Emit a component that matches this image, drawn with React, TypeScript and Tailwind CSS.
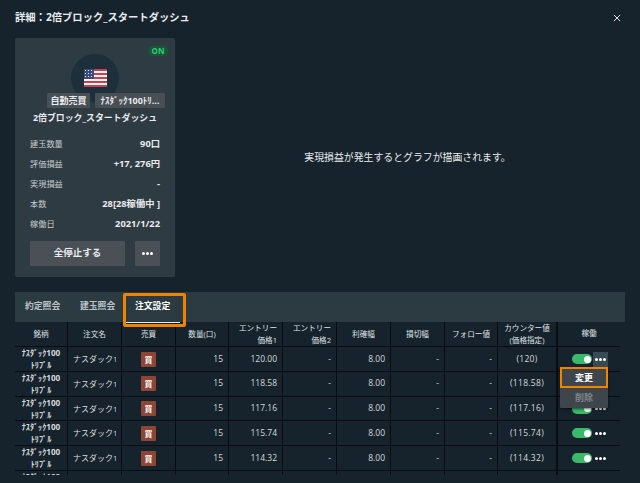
const font = { fontFamily: '"Open Sans", "Noto Sans CJK JP", sans-serif' };

const stats = [
  ["建玉数量", "90口"],
  ["評価損益", "+17, 276円"],
  ["実現損益", "-"],
  ["本数", "28[28稼働中 ]"],
  ["稼働日", "2021/1/22"],
];

const rows = [
  ["120.00", "(120)"],
  ["118.58", "(118.58)"],
  ["117.16", "(117.16)"],
  ["115.74", "(115.74)"],
  ["114.32", "(114.32)"],
];

const cols = "grid grid-cols-[53px_54px_54px_53px_54px_54px_54px_54px_53px_60px_62px]";
const cell = "flex items-center border-r border-[#070d12] h-full";

function Flag() {
  return (
    <svg width="23" height="18" viewBox="0 0 23 18">
      <rect width="23" height="18" fill="#f4f4f4" />
      <rect y="0" width="23" height="2" fill="#c8404f" />
      <rect y="4" width="23" height="2" fill="#c8404f" />
      <rect y="8" width="23" height="2" fill="#c8404f" />
      <rect y="12" width="23" height="2" fill="#c8404f" />
      <rect y="16" width="23" height="2" fill="#c8404f" />
      <rect width="10" height="10" fill="#3d4a7d" />
      <g fill="#e6e8f0">
        <rect x="1" y="1" width="1" height="1" />
        <rect x="4" y="1" width="1" height="1" />
        <rect x="7" y="1" width="1" height="1" />
        <rect x="1" y="4" width="1" height="1" />
        <rect x="4" y="4" width="1" height="1" />
        <rect x="7" y="4" width="1" height="1" />
        <rect x="1" y="7" width="1" height="1" />
        <rect x="4" y="7" width="1" height="1" />
        <rect x="7" y="7" width="1" height="1" />
      </g>
    </svg>
  );
}

function Dots() {
  return (
    <span className="flex gap-[1px]">
      <span className="w-[3px] h-[3px] rounded-full bg-white" />
      <span className="w-[3px] h-[3px] rounded-full bg-white" />
      <span className="w-[3px] h-[3px] rounded-full bg-white" />
    </span>
  );
}

function HeaderCell({ children, right, thick }: { children: React.ReactNode; right?: boolean; thick?: boolean }) {
  return (
    <div className={`${cell} text-[7.6px] leading-[12px] text-[#dfe3e6] ${thick ? "border-r-2" : ""} ${right ? "justify-end text-right pr-[5px]" : "justify-center text-center"}`}>
      <div>{children}</div>
    </div>
  );
}

export default function App() {
  return (
    <div style={font} className="relative w-[640px] h-[483px] overflow-hidden bg-[#17232c] text-[#e8ebed]">
      <div className="flex items-center justify-between pl-[15px] pr-[19px] pt-[10px] h-[38px] pb-[13px]">
        <h1 className="text-[10.3px] font-bold leading-[15px]">詳細：2倍ブロック_スタートダッシュ</h1>
        <svg width="8" height="8" viewBox="0 0 9 9" stroke="#e8ebed" strokeWidth="1.1">
          <path d="M1 1 8 8M8 1 1 8" />
        </svg>
      </div>

      <div className="flex pl-[15px] h-[239px]">
        <div className="relative w-[160px] h-full bg-[#2f3b42] rounded-[2px] px-[15px] flex flex-col">
          <span className="absolute right-[7px] top-[8px] w-[20px] h-[10px] rounded-full bg-[#155a37] text-[#3fc47c] text-[8px] font-bold leading-[10px] text-center">ON</span>
          <div className="mx-auto mt-[15px] w-[50px] h-[50px] rounded-full bg-[#1e2f3c] border border-[#2a3d4b] flex items-center justify-center shrink-0">
            <Flag />
          </div>
          <div className="flex gap-[5px] -mt-[10px] ml-[17px] relative w-[118px]">
            <span className="h-[15px] w-[43px] shrink-0 bg-[#484f55] text-[9px] font-bold leading-[15px] text-center rounded-[1px]">自動売買</span>
            <span className="h-[15px] w-[70px] shrink-0 bg-[#484f55] text-[9px] font-bold leading-[15px] text-center rounded-[1px] whitespace-nowrap overflow-hidden">ﾅｽﾀﾞｯｸ100ﾄﾘ…</span>
          </div>
          <p className="mt-[2px] h-[16px] text-[8.9px] font-bold leading-[16px] text-center whitespace-nowrap">2倍ブロック_スタートダッシュ</p>
          <div className="mt-[11px] flex flex-col gap-[7px]">
            {stats.map(([label, value]) => (
              <div key={label} className="flex justify-between h-[13px] items-center leading-[13px]">
                <span className="text-[#c5cccf] text-[8.2px]">{label}</span>
                <span className="font-bold text-[9.3px]">{value}</span>
              </div>
            ))}
          </div>
          <div className="mt-[11px] flex justify-between">
            <button className="w-[95px] h-[25px] bg-[#4a5055] rounded-[1px] text-[9.5px] font-bold text-[#e8ebed]">全停止する</button>
            <button className="w-[25px] h-[25px] bg-[#4a5055] rounded-[1px] flex items-center justify-center">
              <Dots />
            </button>
          </div>
        </div>
        <div className="flex-1 flex items-center justify-center">
          <p className="text-[9.9px]">実現損益が発生するとグラフが描画されます。</p>
        </div>
      </div>

      <div className="relative mt-[15px] ml-[15px] w-[610px]">
        <div className="flex items-start h-[30px] pl-[10px] gap-[20px] bg-[#2c3a42] text-[8.8px] font-bold">
          <span className="w-[35px] pt-[8px] text-[#b8c1c6] whitespace-nowrap">約定照会</span>
          <span className="w-[35px] pt-[8px] text-[#b8c1c6] whitespace-nowrap">建玉照会</span>
          <span className="w-[35px] pt-[8px] text-white whitespace-nowrap">注文設定</span>
        </div>
        <div className="absolute left-[108px] top-[1px] w-[63px] h-[34px] border-[3px] border-[#f28300] rounded-[2px]">
          <div className="absolute left-0 right-[3px] bottom-[1px] h-[1.5px] bg-[#e8ebed]" />
        </div>

        <div className="w-[605px] h-[153px] overflow-hidden">
          <div className={`${cols} h-[25px] border-b border-[#070d12]`}>
            <HeaderCell>銘柄</HeaderCell>
            <HeaderCell>注文名</HeaderCell>
            <HeaderCell>売買</HeaderCell>
            <HeaderCell>数量(口)</HeaderCell>
            <HeaderCell right>エントリー<br />価格1</HeaderCell>
            <HeaderCell right>エントリー<br />価格2</HeaderCell>
            <HeaderCell>利確幅</HeaderCell>
            <HeaderCell>損切幅</HeaderCell>
            <HeaderCell>フォロー値</HeaderCell>
            <HeaderCell thick>カウンター値<br />(価格指定)</HeaderCell>
            <div className="flex items-center justify-center text-[7.6px] text-[#dfe3e6]">稼働</div>
          </div>
          {[...rows, ["", ""]].map(([price, counter], i) => (
            <div key={i} className={`${cols} h-[24.8px] border-b border-[#070d12] text-[8.5px] text-[#d5dadd]`}>
              <div className={`${cell} justify-center text-center text-[8.2px] leading-[12px] font-bold`}>
                <div>ﾅｽﾀﾞｯｸ100<br />ﾄﾘﾌﾟﾙ</div>
              </div>
              <div className={`${cell} justify-center overflow-hidden whitespace-nowrap text-[8px]`}>
                {price && <span className="w-[43px] overflow-hidden">ナスダック1</span>}
              </div>
              <div className={`${cell} justify-center`}>
                {price && <span className="w-[15px] h-[15px] bg-[#8f4535] rounded-[1px] text-[8px] font-bold text-white leading-[15px] text-center">買</span>}
              </div>
              <div className={`${cell} justify-end pr-[5px]`}>{price && "15"}</div>
              <div className={`${cell} justify-end pr-[5px]`}>{price}</div>
              <div className={`${cell} justify-end pr-[5px]`}>{price && "-"}</div>
              <div className={`${cell} justify-end pr-[5px]`}>{price && "8.00"}</div>
              <div className={`${cell} justify-end pr-[5px]`}>{price && "-"}</div>
              <div className={`${cell} justify-end pr-[5px]`}>{price && "-"}</div>
              <div className={`${cell} border-r-2 justify-center tracking-[0.3px]`}>{counter}</div>
              <div className="flex items-center pl-[14px] gap-[3px]">
                {price && (
                  <>
                    <span className="w-[20px] h-[10px] rounded-full bg-[#3bb96a] flex items-center justify-end pr-[1.5px]">
                      <span className="w-[7px] h-[7px] rounded-full bg-white" />
                    </span>
                    <Dots />
                  </>
                )}
              </div>
            </div>
          ))}
        </div>

        <div className="absolute left-[545px] top-[75px] w-[48px] h-[41px] bg-[#3f464b] shadow-[0_1px_3px_rgba(0,0,0,0.6)] rounded-[1px] text-[9px] font-bold">
          <div className="h-[21px] border-[2px] border-[#f28300] flex items-center justify-center text-white">変更</div>
          <div className="h-[20px] flex items-center justify-center text-[#7d858a]">削除</div>
        </div>
        <div className="absolute left-[578px] top-[60px] w-[15px] h-[15px] bg-[#3a4a55] flex items-center justify-center">
          <Dots />
        </div>
      </div>
    </div>
  );
}
